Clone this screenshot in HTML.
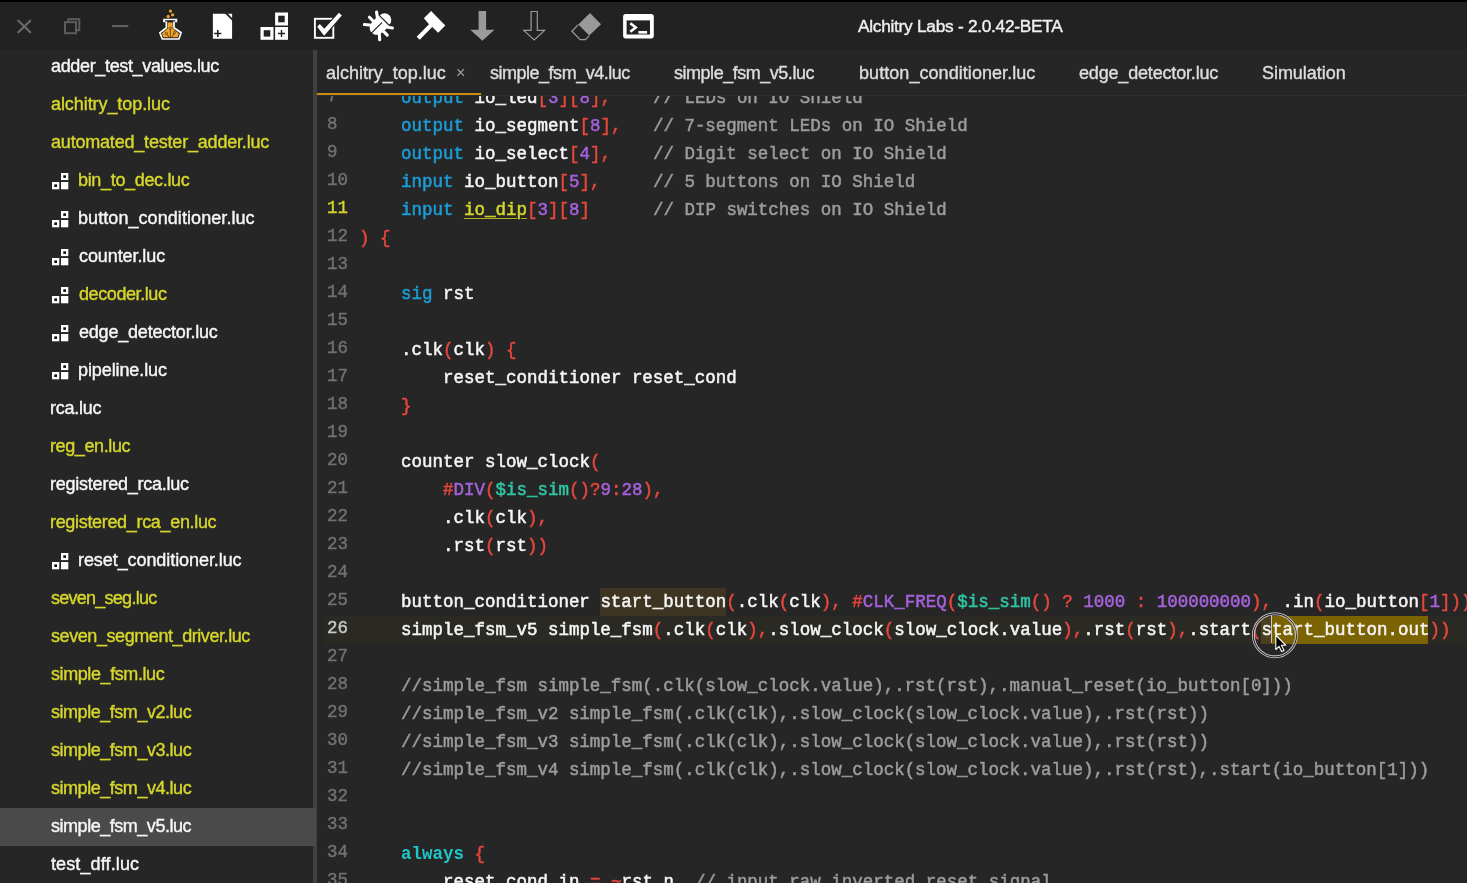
<!DOCTYPE html>
<html><head><meta charset="utf-8">
<style>
html,body{margin:0;padding:0;width:1467px;height:883px;overflow:hidden;background:#262626;}
body{position:relative;font-family:"Liberation Sans",sans-serif;}
#strip{position:absolute;left:0;top:0;width:1467px;height:2px;background:#000;}
#title{position:absolute;left:0;top:0;width:1467px;height:50px;background:#222222;}
#title svg{position:absolute;}
#ttext{position:absolute;left:857.5px;top:15.5px;font-size:17.3px;color:#f0f0f0;white-space:nowrap;line-height:20px;-webkit-text-stroke:0.4px currentColor;}
#side{position:absolute;left:0;top:50px;width:316px;height:833px;overflow:hidden;}
.si{position:absolute;left:0;width:316px;height:38px;}
#side .si{margin-top:-50px;}
.si span{position:absolute;top:7.5px;font-size:18px;line-height:20px;white-space:nowrap;-webkit-text-stroke:0.4px currentColor;}
.si.sel{background:#4a4a4a;}
#split{position:absolute;left:313px;top:50px;width:4px;height:833px;background:#404040;}
#tabs{position:absolute;left:317px;top:50px;width:1150px;height:46px;background:#262626;}
.tab{position:absolute;top:13px;font-size:18px;line-height:20px;color:#dcdcdc;white-space:nowrap;margin-left:-317px;-webkit-text-stroke:0.4px currentColor;}
#tabx{position:absolute;left:138.8px;top:13px;font-size:16px;color:#a0a0a0;line-height:20px;}
#tabul{position:absolute;left:0;top:43px;width:164px;height:2px;background:#c88b12;}
#tabline{position:absolute;left:0;top:45px;width:1150px;height:1px;background:#303030;}
#editor{position:absolute;left:317px;top:96px;width:1150px;height:787px;overflow:hidden;background:#262626;}
.ln,.num,.si span,.tab,#ttext,#tabx{will-change:transform;}
#editor>div{position:absolute;margin-left:-317px;margin-top:-96px;}
.ln{left:358.5px;height:28px;line-height:28px;font-family:"Liberation Mono",monospace;font-size:17.49px;white-space:pre;-webkit-text-stroke:0.5px currentColor;}
.ln span{-webkit-text-stroke:0.5px currentColor;}
.num{left:327px;width:48px;text-align:left;height:28px;line-height:24px;font-family:"Liberation Mono",monospace;font-size:17.49px;-webkit-text-stroke:0.4px currentColor;}
#cur25{height:28px;background:#3e3422;}
#cl26{left:324px;width:1143px;height:28px;background:#2a2924;}
#sel26a{height:28px;background:#4c3f20;}
#sel26b{height:28px;background:#7a6300;}
#caret{left:1271px;width:1.4px;height:28px;background:#c8c8c8;}
</style></head><body>

<div id="title">
<svg width="20" height="20" style="left:14px;top:15px" viewBox="0 0 20 20"><path d="M4.3 5.7 L16.3 17.3 M16.3 5.7 L4.3 17.3" stroke="#6a6a6a" stroke-width="2.1" stroke-linecap="round"/></svg>
<svg width="24" height="24" style="left:60px;top:14px" viewBox="0 0 24 24"><rect x="8.3" y="5.2" width="11" height="11" fill="none" stroke="#5c5c5c" stroke-width="2"/><rect x="5" y="8.2" width="11" height="11" fill="#222" stroke="#5c5c5c" stroke-width="2"/></svg>
<svg width="24" height="10" style="left:108px;top:21px" viewBox="0 0 24 10"><rect x="4" y="4" width="16.3" height="2.2" fill="#5e5e5e"/></svg>
<svg width="30" height="36" style="left:155px;top:6px" viewBox="0 0 30 36">
<circle cx="15.5" cy="5.1" r="1.6" fill="#eea42a"/><circle cx="17.6" cy="8.8" r="1.6" fill="#eea42a"/><circle cx="13.2" cy="10.4" r="1.6" fill="#eea42a"/>
<path d="M9,13.6 H21.4 V15.4 H19 V21.8 L26.1,26.7 L23.9,33 H7.3 L4.9,26.7 L11.4,21.8 V15.4 H9 Z" fill="#222" stroke="#fff" stroke-width="1.7" stroke-linejoin="miter"/>
<rect x="10" y="14.3" width="10.4" height="1.2" fill="#1e1e1e"/>
<path d="M12.8,16.4 H17.6 V22.4 L23.9,27.4 L22.6,31.3 H8.3 L7,27.4 L12.8,22.4 Z" fill="#f0a52c"/>
<path d="M15.3,23.4 V31.3 M11.8,28.2 C12.3,29.5 13.5,30.3 14.2,31.3 M19.1,27.4 C18.6,28.8 17.2,30 16.4,31.3" stroke="#4a3200" stroke-width="0.8" fill="none"/>
<circle cx="15.3" cy="22.4" r="1.1" fill="none" stroke="#4a3200" stroke-width="0.75"/>
<circle cx="11.4" cy="27.4" r="1.1" fill="none" stroke="#4a3200" stroke-width="0.75"/>
<circle cx="19.5" cy="26.6" r="1.1" fill="none" stroke="#4a3200" stroke-width="0.75"/>
</svg>
<svg width="30" height="36" style="left:208px;top:8px" viewBox="0 0 30 36">
<path d="M4.9,5.7 H17.3 L24.1,12.4 V30.8 H4.9 Z" fill="#fff"/>
<path d="M19.9,5.7 H24.1 V9.9 Z" fill="#fff"/>
<path d="M6.2,25.5 H13.4 M9.8,21.9 V29.1" stroke="#222" stroke-width="1.6"/>
</svg>
<svg width="36" height="36" style="left:256px;top:8px" viewBox="0 0 36 36">
<rect x="19.1" y="4.5" width="12.9" height="13" fill="#fff"/><rect x="22.2" y="7.7" width="6.5" height="6.6" fill="#222"/>
<rect x="4.5" y="19" width="13" height="12.8" fill="#fff"/><rect x="7.7" y="22.2" width="6.6" height="6.4" fill="#222"/>
<rect x="19.1" y="19" width="12.9" height="12.8" fill="#fff"/>
<path d="M22,25.5 H29 M25.5,22 V29" stroke="#222" stroke-width="1.4"/>
</svg>
<svg width="36" height="36" style="left:308px;top:8px" viewBox="0 0 36 36">
<rect x="6.9" y="10.8" width="18.4" height="19" fill="none" stroke="#fff" stroke-width="1.9"/>
<path d="M9.2,18.8 L11.8,16.1 L16.3,20.8 L31,4.7 L33.8,7.5 L16.1,27.7 Z" fill="#fff" stroke="#222" stroke-width="2.2" stroke-linejoin="miter" paint-order="stroke"/>
</svg>
<svg width="40" height="36" style="left:358px;top:8px" viewBox="0 0 40 36">
<g transform="translate(26.2,12.3) rotate(45)" fill="#fff" stroke="#fff" stroke-linecap="round">
<path d="M-6.7,-0.6 A6.7,6.7 0 0 1 6.7,-0.6 Z" stroke="none"/>
<path d="M-7.4,0.6 H7.4 V8 C7.4,14.5 4,17.6 0,17.6 C-4,17.6 -7.4,14.5 -7.4,8 Z" stroke="none"/>
<path d="M-5,4.2 L-11.2,-0.4 M5,4.2 L11.2,-0.4 M-6,8.3 H-12.6 M6,8.3 H12.6 M-5.5,12.5 L-11,17 M5.5,12.5 L10.6,17" stroke-width="3.1" fill="none"/>
<path d="M0,3.6 V18.5" stroke="#222" stroke-width="1.2"/>
</g>
</svg>
<svg width="40" height="38" style="left:410px;top:6px" viewBox="0 0 40 38">
<path d="M21.1,5 L35.3,19.4 L28.2,26.7 L22.2,21.1 L9.7,33.8 L6.7,30.8 L19,18.3 L13.8,12.3 Z" fill="#fff"/>
</svg>
<svg width="85" height="38" style="left:465px;top:6px" viewBox="0 0 85 38">
<path d="M13.6,4.9 H21.1 V23.8 H29.5 L17.4,34.8 L5.2,23.8 H13.6 Z" fill="#9a9a9a"/>
<path d="M66.1,5.5 H72.3 V24.4 H79.6 L69.2,34 L58.8,24.4 H66.1 Z" fill="none" stroke="#9a9a9a" stroke-width="1.2"/>
</svg>
<svg width="94" height="38" style="left:566px;top:6px" viewBox="0 0 94 38">
<path d="M24,7 L35,18.2 L23.3,29.6 L12.3,18.6 Z" fill="#9a9a9a"/>
<path d="M12.3,18.6 L5.9,25.3 L14.2,33.6 H19.4 L23.3,29.6" fill="none" stroke="#9a9a9a" stroke-width="1.3"/>
<rect x="57.1" y="8" width="30.7" height="24.4" rx="2.6" fill="#fff"/>
<rect x="60.6" y="14.4" width="23.4" height="14.1" fill="#222"/>
<path d="M64.3,17.3 L69.8,21.5 L64.3,25.8" fill="none" stroke="#fff" stroke-width="2.5"/>
<rect x="72.4" y="25" width="8.7" height="2.6" fill="#fff"/>
</svg>

<div id="ttext" style="letter-spacing:-0.275px">Alchitry Labs - 2.0.42-BETA</div>
</div>
<div id="strip"></div>
<div id="split"></div>
<div id="side">
<div class="si" style="top:48px"><span style="left:50.5px;color:#f6f6f6;letter-spacing:-0.345px">adder_test_values.luc</span></div>
<div class="si" style="top:86px"><span style="left:50.5px;color:#d6d62c;letter-spacing:-0.073px">alchitry_top.luc</span></div>
<div class="si" style="top:124px"><span style="left:50.5px;color:#d6d62c;letter-spacing:-0.196px">automated_tester_adder.luc</span></div>
<div class="si" style="top:162px"><div style="position:absolute;left:50px;top:10px"><svg width="20" height="20" viewBox="0 0 20 20" style="display:block"><rect x="11" y="1" width="7.3" height="7.1" fill="#fff"/><rect x="13.3" y="3.3" width="2.7" height="2.6" fill="#111"/><rect x="2" y="10" width="7.3" height="7.3" fill="#fff"/><rect x="4.3" y="12.4" width="2.7" height="2.6" fill="#111"/><rect x="11" y="10" width="7.3" height="7.3" fill="#fff"/></svg></div><span style="left:77.7px;color:#d6d62c;letter-spacing:-0.331px">bin_to_dec.luc</span></div>
<div class="si" style="top:200px"><div style="position:absolute;left:50px;top:10px"><svg width="20" height="20" viewBox="0 0 20 20" style="display:block"><rect x="11" y="1" width="7.3" height="7.1" fill="#fff"/><rect x="13.3" y="3.3" width="2.7" height="2.6" fill="#111"/><rect x="2" y="10" width="7.3" height="7.3" fill="#fff"/><rect x="4.3" y="12.4" width="2.7" height="2.6" fill="#111"/><rect x="11" y="10" width="7.3" height="7.3" fill="#fff"/></svg></div><span style="left:77.7px;color:#f6f6f6;letter-spacing:0.071px">button_conditioner.luc</span></div>
<div class="si" style="top:238px"><div style="position:absolute;left:50px;top:10px"><svg width="20" height="20" viewBox="0 0 20 20" style="display:block"><rect x="11" y="1" width="7.3" height="7.1" fill="#fff"/><rect x="13.3" y="3.3" width="2.7" height="2.6" fill="#111"/><rect x="2" y="10" width="7.3" height="7.3" fill="#fff"/><rect x="4.3" y="12.4" width="2.7" height="2.6" fill="#111"/><rect x="11" y="10" width="7.3" height="7.3" fill="#fff"/></svg></div><span style="left:78.7px;color:#f6f6f6;letter-spacing:-0.09px">counter.luc</span></div>
<div class="si" style="top:276px"><div style="position:absolute;left:50px;top:10px"><svg width="20" height="20" viewBox="0 0 20 20" style="display:block"><rect x="11" y="1" width="7.3" height="7.1" fill="#fff"/><rect x="13.3" y="3.3" width="2.7" height="2.6" fill="#111"/><rect x="2" y="10" width="7.3" height="7.3" fill="#fff"/><rect x="4.3" y="12.4" width="2.7" height="2.6" fill="#111"/><rect x="11" y="10" width="7.3" height="7.3" fill="#fff"/></svg></div><span style="left:78.7px;color:#d6d62c;letter-spacing:-0.41px">decoder.luc</span></div>
<div class="si" style="top:314px"><div style="position:absolute;left:50px;top:10px"><svg width="20" height="20" viewBox="0 0 20 20" style="display:block"><rect x="11" y="1" width="7.3" height="7.1" fill="#fff"/><rect x="13.3" y="3.3" width="2.7" height="2.6" fill="#111"/><rect x="2" y="10" width="7.3" height="7.3" fill="#fff"/><rect x="4.3" y="12.4" width="2.7" height="2.6" fill="#111"/><rect x="11" y="10" width="7.3" height="7.3" fill="#fff"/></svg></div><span style="left:78.7px;color:#f6f6f6;letter-spacing:-0.206px">edge_detector.luc</span></div>
<div class="si" style="top:352px"><div style="position:absolute;left:50px;top:10px"><svg width="20" height="20" viewBox="0 0 20 20" style="display:block"><rect x="11" y="1" width="7.3" height="7.1" fill="#fff"/><rect x="13.3" y="3.3" width="2.7" height="2.6" fill="#111"/><rect x="2" y="10" width="7.3" height="7.3" fill="#fff"/><rect x="4.3" y="12.4" width="2.7" height="2.6" fill="#111"/><rect x="11" y="10" width="7.3" height="7.3" fill="#fff"/></svg></div><span style="left:77.7px;color:#f6f6f6;letter-spacing:-0.1px">pipeline.luc</span></div>
<div class="si" style="top:390px"><span style="left:49.5px;color:#f6f6f6;letter-spacing:-0.267px">rca.luc</span></div>
<div class="si" style="top:428px"><span style="left:49.5px;color:#d6d62c;letter-spacing:-0.389px">reg_en.luc</span></div>
<div class="si" style="top:466px"><span style="left:49.5px;color:#f6f6f6;letter-spacing:-0.235px">registered_rca.luc</span></div>
<div class="si" style="top:504px"><span style="left:49.5px;color:#d6d62c;letter-spacing:-0.325px">registered_rca_en.luc</span></div>
<div class="si" style="top:542px"><div style="position:absolute;left:50px;top:10px"><svg width="20" height="20" viewBox="0 0 20 20" style="display:block"><rect x="11" y="1" width="7.3" height="7.1" fill="#fff"/><rect x="13.3" y="3.3" width="2.7" height="2.6" fill="#111"/><rect x="2" y="10" width="7.3" height="7.3" fill="#fff"/><rect x="4.3" y="12.4" width="2.7" height="2.6" fill="#111"/><rect x="11" y="10" width="7.3" height="7.3" fill="#fff"/></svg></div><span style="left:77.7px;color:#f6f6f6;letter-spacing:-0.075px">reset_conditioner.luc</span></div>
<div class="si" style="top:580px"><span style="left:50.5px;color:#d6d62c;letter-spacing:-0.742px">seven_seg.luc</span></div>
<div class="si" style="top:618px"><span style="left:50.5px;color:#d6d62c;letter-spacing:-0.426px">seven_segment_driver.luc</span></div>
<div class="si" style="top:656px"><span style="left:50.5px;color:#d6d62c;letter-spacing:-0.408px">simple_fsm.luc</span></div>
<div class="si" style="top:694px"><span style="left:50.5px;color:#d6d62c;letter-spacing:-0.463px">simple_fsm_v2.luc</span></div>
<div class="si" style="top:732px"><span style="left:50.5px;color:#d6d62c;letter-spacing:-0.463px">simple_fsm_v3.luc</span></div>
<div class="si" style="top:770px"><span style="left:50.5px;color:#d6d62c;letter-spacing:-0.463px">simple_fsm_v4.luc</span></div>
<div class="si sel" style="top:808px"><span style="left:50.5px;color:#f6f6f6;letter-spacing:-0.469px">simple_fsm_v5.luc</span></div>
<div class="si" style="top:846px"><span style="left:50.5px;color:#f6f6f6;letter-spacing:0.118px">test_dff.luc</span></div>
</div>
<div id="tabs">
<div class="tab" style="left:325.5px;letter-spacing:-0.027px">alchitry_top.luc</div>
<div class="tab" style="left:489.7px;letter-spacing:-0.488px">simple_fsm_v4.luc</div>
<div class="tab" style="left:674.2px;letter-spacing:-0.475px">simple_fsm_v5.luc</div>
<div class="tab" style="left:858.5px;letter-spacing:0.057px">button_conditioner.luc</div>
<div class="tab" style="left:1079.4px;letter-spacing:-0.175px">edge_detector.luc</div>
<div class="tab" style="left:1261.5px;letter-spacing:-0.044px">Simulation</div>
<div id="tabx">&#215;</div>
<div id="tabul"></div>
<div id="tabline"></div>
</div>
<div id="editor">
<div id="cur25" style="top:588px;left:600px;width:126px"></div>
<div id="cl26" style="top:616px"></div>
<div id="sel26a" style="top:616px;left:1261px;width:11px"></div>
<div id="sel26b" style="top:616px;left:1272px;width:156px"></div>
<div class="num" style="top:84px;color:#727272">7</div>
<div class="num" style="top:112px;color:#727272">8</div>
<div class="num" style="top:140px;color:#727272">9</div>
<div class="num" style="top:168px;color:#727272">10</div>
<div class="num" style="top:196px;color:#d6d62c">11</div>
<div class="num" style="top:224px;color:#727272">12</div>
<div class="num" style="top:252px;color:#727272">13</div>
<div class="num" style="top:280px;color:#727272">14</div>
<div class="num" style="top:308px;color:#727272">15</div>
<div class="num" style="top:336px;color:#727272">16</div>
<div class="num" style="top:364px;color:#727272">17</div>
<div class="num" style="top:392px;color:#727272">18</div>
<div class="num" style="top:420px;color:#727272">19</div>
<div class="num" style="top:448px;color:#727272">20</div>
<div class="num" style="top:476px;color:#727272">21</div>
<div class="num" style="top:504px;color:#727272">22</div>
<div class="num" style="top:532px;color:#727272">23</div>
<div class="num" style="top:560px;color:#727272">24</div>
<div class="num" style="top:588px;color:#727272">25</div>
<div class="num" style="top:616px;color:#cacaca">26</div>
<div class="num" style="top:644px;color:#727272">27</div>
<div class="num" style="top:672px;color:#727272">28</div>
<div class="num" style="top:700px;color:#727272">29</div>
<div class="num" style="top:728px;color:#727272">30</div>
<div class="num" style="top:756px;color:#727272">31</div>
<div class="num" style="top:784px;color:#727272">32</div>
<div class="num" style="top:812px;color:#727272">33</div>
<div class="num" style="top:840px;color:#727272">34</div>
<div class="num" style="top:868px;color:#727272">35</div>
<div class="ln" style="top:84px"><span style="color:#f6f6f6"> </span><span style="color:#f6f6f6"> </span><span style="color:#f6f6f6"> </span><span style="color:#f6f6f6"> </span><span style="color:#1c9ed8">output</span><span style="color:#f6f6f6"> </span><span style="color:#f6f6f6">io_led</span><span style="color:#e4473d">[</span><span style="color:#a562dc">3</span><span style="color:#e4473d">]</span><span style="color:#e4473d">[</span><span style="color:#a562dc">8</span><span style="color:#e4473d">]</span><span style="color:#e4473d">,</span><span style="color:#f6f6f6"> </span><span style="color:#f6f6f6"> </span><span style="color:#f6f6f6"> </span><span style="color:#f6f6f6"> </span><span style="color:#9c9c9c">// LEDs on IO Shield</span></div>
<div class="ln" style="top:112px"><span style="color:#f6f6f6"> </span><span style="color:#f6f6f6"> </span><span style="color:#f6f6f6"> </span><span style="color:#f6f6f6"> </span><span style="color:#1c9ed8">output</span><span style="color:#f6f6f6"> </span><span style="color:#f6f6f6">io_segment</span><span style="color:#e4473d">[</span><span style="color:#a562dc">8</span><span style="color:#e4473d">]</span><span style="color:#e4473d">,</span><span style="color:#f6f6f6"> </span><span style="color:#f6f6f6"> </span><span style="color:#f6f6f6"> </span><span style="color:#9c9c9c">// 7-segment LEDs on IO Shield</span></div>
<div class="ln" style="top:140px"><span style="color:#f6f6f6"> </span><span style="color:#f6f6f6"> </span><span style="color:#f6f6f6"> </span><span style="color:#f6f6f6"> </span><span style="color:#1c9ed8">output</span><span style="color:#f6f6f6"> </span><span style="color:#f6f6f6">io_select</span><span style="color:#e4473d">[</span><span style="color:#a562dc">4</span><span style="color:#e4473d">]</span><span style="color:#e4473d">,</span><span style="color:#f6f6f6"> </span><span style="color:#f6f6f6"> </span><span style="color:#f6f6f6"> </span><span style="color:#f6f6f6"> </span><span style="color:#9c9c9c">// Digit select on IO Shield</span></div>
<div class="ln" style="top:168px"><span style="color:#f6f6f6"> </span><span style="color:#f6f6f6"> </span><span style="color:#f6f6f6"> </span><span style="color:#f6f6f6"> </span><span style="color:#1c9ed8">input</span><span style="color:#f6f6f6"> </span><span style="color:#f6f6f6">io_button</span><span style="color:#e4473d">[</span><span style="color:#a562dc">5</span><span style="color:#e4473d">]</span><span style="color:#e4473d">,</span><span style="color:#f6f6f6"> </span><span style="color:#f6f6f6"> </span><span style="color:#f6f6f6"> </span><span style="color:#f6f6f6"> </span><span style="color:#f6f6f6"> </span><span style="color:#9c9c9c">// 5 buttons on IO Shield</span></div>
<div class="ln" style="top:196px"><span style="color:#f6f6f6"> </span><span style="color:#f6f6f6"> </span><span style="color:#f6f6f6"> </span><span style="color:#f6f6f6"> </span><span style="color:#1c9ed8">input</span><span style="color:#f6f6f6"> </span><span style="color:#d6d62c;text-decoration:underline;text-decoration-color:#b0b020;text-decoration-thickness:1px;text-underline-offset:3px;-webkit-text-stroke:0.5px currentColor">io_dip</span><span style="color:#e4473d">[</span><span style="color:#a562dc">3</span><span style="color:#e4473d">]</span><span style="color:#e4473d">[</span><span style="color:#a562dc">8</span><span style="color:#e4473d">]</span><span style="color:#f6f6f6"> </span><span style="color:#f6f6f6"> </span><span style="color:#f6f6f6"> </span><span style="color:#f6f6f6"> </span><span style="color:#f6f6f6"> </span><span style="color:#f6f6f6"> </span><span style="color:#9c9c9c">// DIP switches on IO Shield</span></div>
<div class="ln" style="top:224px"><span style="color:#e4473d">)</span><span style="color:#f6f6f6"> </span><span style="color:#e4473d">{</span></div>
<div class="ln" style="top:252px"></div>
<div class="ln" style="top:280px"><span style="color:#f6f6f6"> </span><span style="color:#f6f6f6"> </span><span style="color:#f6f6f6"> </span><span style="color:#f6f6f6"> </span><span style="color:#1c9ed8">sig</span><span style="color:#f6f6f6"> </span><span style="color:#f6f6f6">rst</span></div>
<div class="ln" style="top:308px"></div>
<div class="ln" style="top:336px"><span style="color:#f6f6f6"> </span><span style="color:#f6f6f6"> </span><span style="color:#f6f6f6"> </span><span style="color:#f6f6f6"> </span><span style="color:#f6f6f6">.</span><span style="color:#f6f6f6">clk</span><span style="color:#e4473d">(</span><span style="color:#f6f6f6">clk</span><span style="color:#e4473d">)</span><span style="color:#f6f6f6"> </span><span style="color:#e4473d">{</span></div>
<div class="ln" style="top:364px"><span style="color:#f6f6f6"> </span><span style="color:#f6f6f6"> </span><span style="color:#f6f6f6"> </span><span style="color:#f6f6f6"> </span><span style="color:#f6f6f6"> </span><span style="color:#f6f6f6"> </span><span style="color:#f6f6f6"> </span><span style="color:#f6f6f6"> </span><span style="color:#f6f6f6">reset_conditioner</span><span style="color:#f6f6f6"> </span><span style="color:#f6f6f6">reset_cond</span></div>
<div class="ln" style="top:392px"><span style="color:#f6f6f6"> </span><span style="color:#f6f6f6"> </span><span style="color:#f6f6f6"> </span><span style="color:#f6f6f6"> </span><span style="color:#e4473d">}</span></div>
<div class="ln" style="top:420px"></div>
<div class="ln" style="top:448px"><span style="color:#f6f6f6"> </span><span style="color:#f6f6f6"> </span><span style="color:#f6f6f6"> </span><span style="color:#f6f6f6"> </span><span style="color:#f6f6f6">counter</span><span style="color:#f6f6f6"> </span><span style="color:#f6f6f6">slow_clock</span><span style="color:#e4473d">(</span></div>
<div class="ln" style="top:476px"><span style="color:#f6f6f6"> </span><span style="color:#f6f6f6"> </span><span style="color:#f6f6f6"> </span><span style="color:#f6f6f6"> </span><span style="color:#f6f6f6"> </span><span style="color:#f6f6f6"> </span><span style="color:#f6f6f6"> </span><span style="color:#f6f6f6"> </span><span style="color:#e4473d">#</span><span style="color:#a562dc">DIV</span><span style="color:#e4473d">(</span><span style="color:#2ec7a5">$is_sim</span><span style="color:#e4473d">(</span><span style="color:#e4473d">)</span><span style="color:#e4473d">?</span><span style="color:#a562dc">9</span><span style="color:#e4473d">:</span><span style="color:#a562dc">28</span><span style="color:#e4473d">)</span><span style="color:#e4473d">,</span></div>
<div class="ln" style="top:504px"><span style="color:#f6f6f6"> </span><span style="color:#f6f6f6"> </span><span style="color:#f6f6f6"> </span><span style="color:#f6f6f6"> </span><span style="color:#f6f6f6"> </span><span style="color:#f6f6f6"> </span><span style="color:#f6f6f6"> </span><span style="color:#f6f6f6"> </span><span style="color:#f6f6f6">.</span><span style="color:#f6f6f6">clk</span><span style="color:#e4473d">(</span><span style="color:#f6f6f6">clk</span><span style="color:#e4473d">)</span><span style="color:#e4473d">,</span></div>
<div class="ln" style="top:532px"><span style="color:#f6f6f6"> </span><span style="color:#f6f6f6"> </span><span style="color:#f6f6f6"> </span><span style="color:#f6f6f6"> </span><span style="color:#f6f6f6"> </span><span style="color:#f6f6f6"> </span><span style="color:#f6f6f6"> </span><span style="color:#f6f6f6"> </span><span style="color:#f6f6f6">.</span><span style="color:#f6f6f6">rst</span><span style="color:#e4473d">(</span><span style="color:#f6f6f6">rst</span><span style="color:#e4473d">)</span><span style="color:#e4473d">)</span></div>
<div class="ln" style="top:560px"></div>
<div class="ln" style="top:588px"><span style="color:#f6f6f6"> </span><span style="color:#f6f6f6"> </span><span style="color:#f6f6f6"> </span><span style="color:#f6f6f6"> </span><span style="color:#f6f6f6">button_conditioner</span><span style="color:#f6f6f6"> </span><span style="color:#f6f6f6">start_button</span><span style="color:#e4473d">(</span><span style="color:#f6f6f6">.</span><span style="color:#f6f6f6">clk</span><span style="color:#e4473d">(</span><span style="color:#f6f6f6">clk</span><span style="color:#e4473d">)</span><span style="color:#e4473d">,</span><span style="color:#f6f6f6"> </span><span style="color:#e4473d">#</span><span style="color:#a562dc">CLK_FREQ</span><span style="color:#e4473d">(</span><span style="color:#2ec7a5">$is_sim</span><span style="color:#e4473d">(</span><span style="color:#e4473d">)</span><span style="color:#f6f6f6"> </span><span style="color:#e4473d">?</span><span style="color:#f6f6f6"> </span><span style="color:#a562dc">1000</span><span style="color:#f6f6f6"> </span><span style="color:#e4473d">:</span><span style="color:#f6f6f6"> </span><span style="color:#a562dc">100000000</span><span style="color:#e4473d">)</span><span style="color:#e4473d">,</span><span style="color:#f6f6f6"> </span><span style="color:#f6f6f6">.</span><span style="color:#f6f6f6">in</span><span style="color:#e4473d">(</span><span style="color:#f6f6f6">io_button</span><span style="color:#e4473d">[</span><span style="color:#a562dc">1</span><span style="color:#e4473d">]</span><span style="color:#e4473d">)</span><span style="color:#e4473d">)</span></div>
<div class="ln" style="top:616px"><span style="color:#f6f6f6"> </span><span style="color:#f6f6f6"> </span><span style="color:#f6f6f6"> </span><span style="color:#f6f6f6"> </span><span style="color:#f6f6f6">simple_fsm_v5</span><span style="color:#f6f6f6"> </span><span style="color:#f6f6f6">simple_fsm</span><span style="color:#e4473d">(</span><span style="color:#f6f6f6">.</span><span style="color:#f6f6f6">clk</span><span style="color:#e4473d">(</span><span style="color:#f6f6f6">clk</span><span style="color:#e4473d">)</span><span style="color:#e4473d">,</span><span style="color:#f6f6f6">.</span><span style="color:#f6f6f6">slow_clock</span><span style="color:#e4473d">(</span><span style="color:#f6f6f6">slow_clock</span><span style="color:#f6f6f6">.</span><span style="color:#f6f6f6">value</span><span style="color:#e4473d">)</span><span style="color:#e4473d">,</span><span style="color:#f6f6f6">.</span><span style="color:#f6f6f6">rst</span><span style="color:#e4473d">(</span><span style="color:#f6f6f6">rst</span><span style="color:#e4473d">)</span><span style="color:#e4473d">,</span><span style="color:#f6f6f6">.</span><span style="color:#f6f6f6">start</span><span style="color:#e4473d">(</span><span style="color:#f6f6f6">start_button</span><span style="color:#f6f6f6">.</span><span style="color:#f6f6f6">out</span><span style="color:#e4473d">)</span><span style="color:#e4473d">)</span></div>
<div class="ln" style="top:644px"></div>
<div class="ln" style="top:672px"><span style="color:#f6f6f6"> </span><span style="color:#f6f6f6"> </span><span style="color:#f6f6f6"> </span><span style="color:#f6f6f6"> </span><span style="color:#9c9c9c">//simple_fsm simple_fsm(.clk(slow_clock.value),.rst(rst),.manual_reset(io_button[0]))</span></div>
<div class="ln" style="top:700px"><span style="color:#f6f6f6"> </span><span style="color:#f6f6f6"> </span><span style="color:#f6f6f6"> </span><span style="color:#f6f6f6"> </span><span style="color:#9c9c9c">//simple_fsm_v2 simple_fsm(.clk(clk),.slow_clock(slow_clock.value),.rst(rst))</span></div>
<div class="ln" style="top:728px"><span style="color:#f6f6f6"> </span><span style="color:#f6f6f6"> </span><span style="color:#f6f6f6"> </span><span style="color:#f6f6f6"> </span><span style="color:#9c9c9c">//simple_fsm_v3 simple_fsm(.clk(clk),.slow_clock(slow_clock.value),.rst(rst))</span></div>
<div class="ln" style="top:756px"><span style="color:#f6f6f6"> </span><span style="color:#f6f6f6"> </span><span style="color:#f6f6f6"> </span><span style="color:#f6f6f6"> </span><span style="color:#9c9c9c">//simple_fsm_v4 simple_fsm(.clk(clk),.slow_clock(slow_clock.value),.rst(rst),.start(io_button[1]))</span></div>
<div class="ln" style="top:784px"></div>
<div class="ln" style="top:812px"></div>
<div class="ln" style="top:840px"><span style="color:#f6f6f6"> </span><span style="color:#f6f6f6"> </span><span style="color:#f6f6f6"> </span><span style="color:#f6f6f6"> </span><span style="color:#20c5c8;font-weight:bold;-webkit-text-stroke:0">always</span><span style="color:#f6f6f6"> </span><span style="color:#e4473d">{</span></div>
<div class="ln" style="top:868px"><span style="color:#f6f6f6"> </span><span style="color:#f6f6f6"> </span><span style="color:#f6f6f6"> </span><span style="color:#f6f6f6"> </span><span style="color:#f6f6f6"> </span><span style="color:#f6f6f6"> </span><span style="color:#f6f6f6"> </span><span style="color:#f6f6f6"> </span><span style="color:#f6f6f6">reset_cond</span><span style="color:#f6f6f6">.</span><span style="color:#f6f6f6">in</span><span style="color:#f6f6f6"> </span><span style="color:#e4473d">=</span><span style="color:#f6f6f6"> </span><span style="color:#e4473d">~</span><span style="color:#f6f6f6">rst_n</span><span style="color:#f6f6f6"> </span><span style="color:#f6f6f6"> </span><span style="color:#9c9c9c">// input raw inverted reset signal</span></div>
<div id="caret" style="top:615px"></div>
</div>
<svg id="mouse" width="60" height="60" viewBox="0 0 60 60" style="position:absolute;left:1245px;top:605px">
<circle cx="29.9" cy="30.3" r="22.4" fill="none" stroke="#bcbcbc" stroke-width="1.1"/>
<circle cx="29.9" cy="30.3" r="21.5" fill="none" stroke="#1a1a1a" stroke-width="0.9"/>
<circle cx="29.9" cy="30.3" r="20.6" fill="none" stroke="#bcbcbc" stroke-width="1.1"/>
<path d="M30.8,30 L30.8,44.5 L34,41.3 L36.6,46.6 L39,45.5 L36.4,40.3 L40.8,40.3 Z" fill="#000" stroke="#fff" stroke-width="1.1" stroke-linejoin="round"/>
</svg>

</body></html>
